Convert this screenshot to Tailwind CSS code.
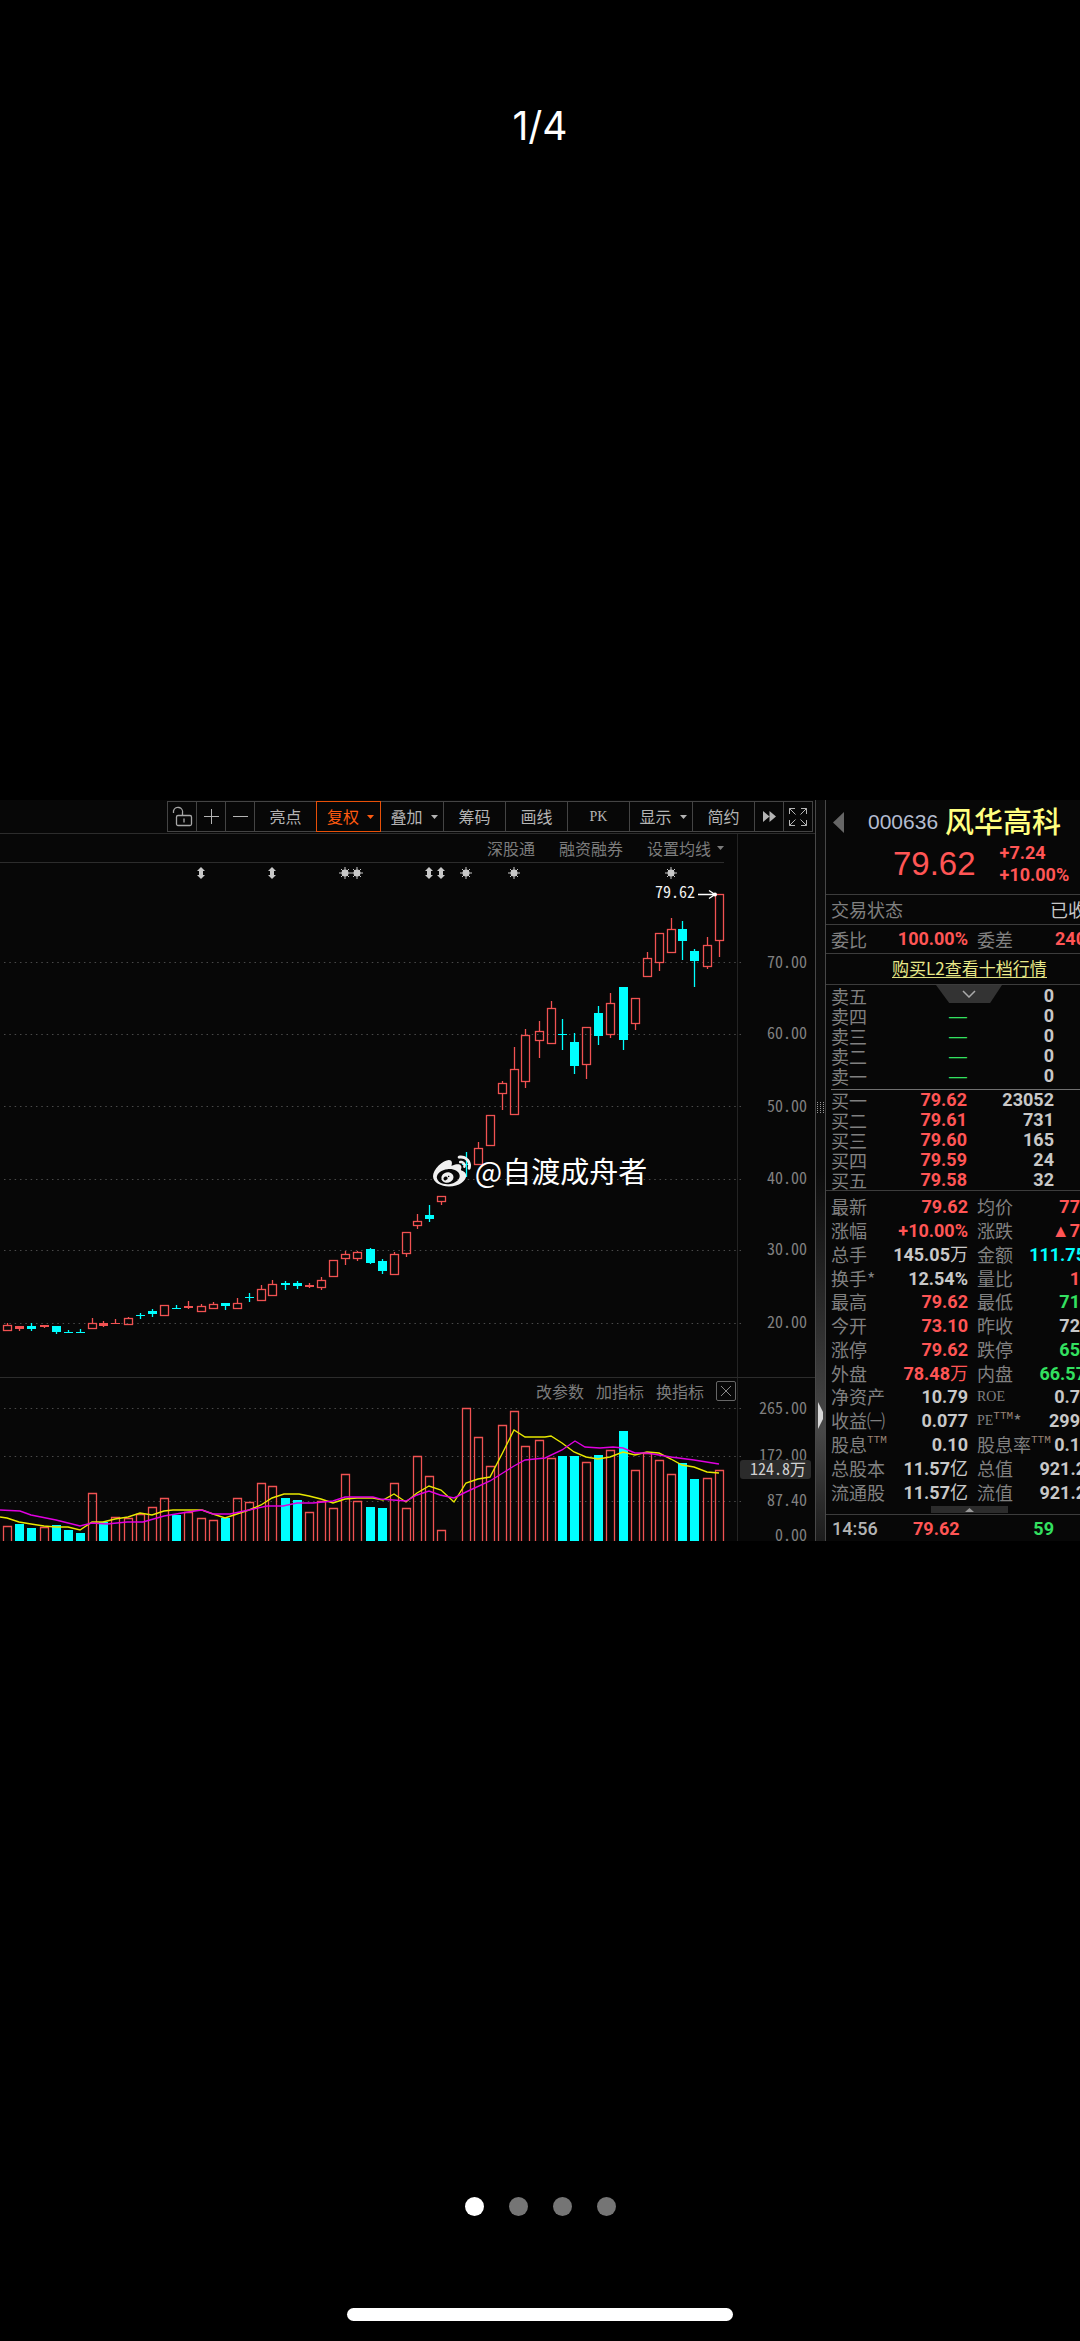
<!DOCTYPE html>
<html lang="zh-CN">
  <head>
    <meta charset="UTF-8" />
    <meta name="viewport" content="width=device-width, initial-scale=1.0" />
    <title>风华高科 000636</title>
    <script src="https://cdn.jsdelivr.net/npm/@tailwindcss/browser@4"></script>
  </head>
  <body
    class="grid min-h-screen grid-rows-[1fr_auto_1fr] overflow-x-hidden bg-black font-['Noto_Sans_CJK_SC',sans-serif] text-[#808080]"
  >
    <!-- Page counter -->
    <header class="pt-[101px] text-center">
      <h1 class="font-['Inter',sans-serif] text-[39px] leading-[50px] text-white">1/4</h1>
    </header>

    <!-- Trading screen -->
    <main class="relative flex bg-[#070707]">
      <section class="flex min-w-0 flex-1 flex-col">
        <!-- Toolbar -->
        <div class="flex justify-end border-b border-[#2c2c2c] pt-px pr-[2px] pb-px">
          <div class="flex h-[31px] border border-r-0 border-[#444] text-[16px] leading-[27px] text-[#b4b4b4]">
            <button aria-label="解锁" class="flex w-[29px] items-center justify-center border-r border-[#444]">
              <svg class="h-[22px] w-[22px]" viewBox="0 0 22 22" fill="none" stroke="#a8a8a8" stroke-width="1.300">
                <rect x="5.500" y="9.500" width="15" height="10" rx="1.500" />
                <path d="M11.500 9V7a4.500 4.500 0 0 0-9-2M2.500 4.500V7M13 12.500v4" />
              </svg>
            </button>
            <button aria-label="放大" class="flex w-[29px] items-center justify-center border-r border-[#444]">
              <svg class="h-[15px] w-[15px]" viewBox="0 0 15 15" stroke="#b4b4b4"><path d="M0 7.500h15M7.500 0v15" /></svg>
            </button>
            <button aria-label="缩小" class="flex w-[29px] items-center justify-center border-r border-[#444]">
              <svg class="h-[15px] w-[15px]" viewBox="0 0 15 15" stroke="#b4b4b4"><path d="M0 7.500h15" /></svg>
            </button>
            <button class="w-[61px]">亮点</button>
            <button
              class="-my-px flex w-[65px] items-center justify-center gap-2 border border-[#e85008] pl-1 text-[#ff5a10]"
            >
              复权
              <svg class="h-[4px] w-[7px]" viewBox="0 0 7 4" fill="currentColor"><path d="M0 0h7L3.500 4z" /></svg>
            </button>
            <button class="flex w-[63px] items-center justify-center gap-2 border-r border-[#444] pl-1">
              叠加
              <svg class="h-[4px] w-[7px]" viewBox="0 0 7 4" fill="currentColor"><path d="M0 0h7L3.500 4z" /></svg>
            </button>
            <button class="w-[62px] border-r border-[#444]">筹码</button>
            <button class="w-[62px] border-r border-[#444]">画线</button>
            <button class="w-[62px] border-r border-[#444] font-['Liberation_Serif',serif] text-[14px]">PK</button>
            <button class="flex w-[63px] items-center justify-center gap-2 border-r border-[#444] pl-1">
              显示
              <svg class="h-[4px] w-[7px]" viewBox="0 0 7 4" fill="currentColor"><path d="M0 0h7L3.500 4z" /></svg>
            </button>
            <button class="w-[62px] border-r border-[#444]">简约</button>
            <button aria-label="更多" class="flex w-[29px] items-center justify-center border-r border-[#444]">
              <svg class="h-[11px] w-[13px]" viewBox="0 0 13 11" fill="#b4b4b4"><path d="M0 0l6.500 5.500L0 11zM6.500 0L13 5.500 6.500 11z" /></svg>
            </button>
            <button aria-label="全屏" class="flex w-[29px] items-center justify-center border-r border-[#444]">
              <svg class="h-[18px] w-[18px]" viewBox="0 0 18 18" fill="none" stroke="#b4b4b4">
                <path d="M.500 6V.500H6M.500.500l6 6M12 .500h5.500V6M17.500.500l-6 6M.500 12v5.500H6M.500 17.500l6-6M12 17.500h5.500V12M17.500 17.500l-6-6" />
              </svg>
            </button>
          </div>
        </div>

        <!-- Chart links -->
        <div class="flex h-[29px] text-[16px] leading-[28px] text-[#7c7c7c]">
          <div class="flex-1 border-r border-[#242424] pr-[13px]">
            <div class="flex h-full justify-end gap-6 border-b border-[#2c2c2c]">
              <a href="#">深股通</a>
              <a href="#">融资融券</a>
              <button class="flex items-center gap-1.5">
                设置均线
                <svg class="h-[4px] w-[7px]" viewBox="0 0 7 4" fill="currentColor"><path d="M0 0h7L3.500 4z" /></svg>
              </button>
            </div>
          </div>
          <div class="w-[77px]"></div>
        </div>

        <!-- Daily candles, the units are page pixels -->
        <svg
          id="candles"
          class="block h-auto w-full font-['Noto_Sans_CJK_SC',sans-serif] text-[16px] [font-feature-settings:'hwid']"
          viewBox="0 863 815 514"
        >
          <g stroke="#4a4a4a" stroke-dasharray="1.500 3.830">
            <path d="M4 962.500H742M4 1034.500H742M4 1106.500H742M4 1179.500H742M4 1250.500H742M4 1323.500H742" />
          </g>
          <path d="M737.500 863v514" stroke="#242424" />
          <g fill="#808080" text-anchor="end">
            <text x="807" y="968">70.00</text>
            <text x="807" y="1039">60.00</text>
            <text x="807" y="1112">50.00</text>
            <text x="807" y="1184">40.00</text>
            <text x="807" y="1255">30.00</text>
            <text x="807" y="1328">20.00</text>
          </g>
          <g id="markers" fill="#c8c8c8" stroke="#c8c8c8"></g>
        </svg>

        <!-- Indicator links -->
        <div class="flex h-[27px] border-t border-[#2c2c2c] text-[16px] leading-[26px] text-[#7c7c7c]">
          <div class="flex flex-1 items-center justify-end gap-3 border-r border-[#242424] pr-px">
            <button>改参数</button>
            <button>加指标</button>
            <button>换指标</button>
            <button aria-label="关闭" class="flex h-[20px] w-[20px] items-center justify-center rounded-xs border border-[#666]">
              <svg class="h-[10px] w-[10px]" viewBox="0 0 10 10" stroke="#888"><path d="M0 0l10 10M10 0L0 10" /></svg>
            </button>
          </div>
          <div class="w-[77px]"></div>
        </div>

        <!-- Volume -->
        <svg
          id="volume"
          class="block h-auto w-full overflow-visible font-['Noto_Sans_CJK_SC',sans-serif] text-[16px] [font-feature-settings:'hwid']"
          viewBox="0 1404 815 137"
        >
          <g stroke="#4a4a4a" stroke-dasharray="1.500 3.830">
            <path d="M4 1408.500H742M4 1456.500H742M4 1501.500H742" />
          </g>
          <path d="M737.500 1404v137" stroke="#242424" />
          <g id="bars"></g>
          <g fill="none" stroke-width="1.400">
            <polyline
              stroke="#e8e800"
              points="0,1517 7,1518 19,1522 31,1524 44,1526 56,1527 68,1527 80,1530 92,1522 103,1522 115,1519 128,1517 140,1513 152,1515 164,1511 173,1510 202,1510 213,1514 225,1518 237,1514 249,1510 261,1505 272,1498 284,1494 299,1494 309,1496 321,1499 333,1503 345,1499 357,1498 373,1498 383,1500 394,1494 406,1502 417,1493 429,1486 441,1490 454,1502 466,1483 478,1479 490,1477 502,1454 514,1430 525,1437 545,1437 551,1436 562,1443 574,1452 586,1457 598,1459 610,1457 623,1452 635,1455 647,1452 659,1453 671,1459 682,1465 694,1467 707,1472 719,1473"
            />
            <polyline
              stroke="#e000e0"
              points="0,1510 20,1511 31,1515 56,1520 80,1526 92,1523 107,1524 127,1522 143,1522 164,1516 188,1512 202,1510 213,1514 230,1514 249,1510 267,1506 283,1506 297,1503 313,1503 333,1501 345,1497 373,1497 380,1499 406,1501 417,1495 429,1491 440,1495 454,1498 466,1492 490,1481 514,1466 525,1460 545,1458 562,1450 575,1441 585,1447 600,1448 613,1447 623,1448 635,1453 647,1453 671,1457 694,1460 719,1464"
            />
          </g>
          <g fill="#808080" text-anchor="end">
            <text x="807" y="1414">265.00</text>
            <text x="807" y="1461">172.00</text>
            <text x="807" y="1506">87.40</text>
            <text x="807" y="1541">0.00</text>
            <rect x="740" y="1460" width="71" height="19" rx="3" fill="#2b2b2b" />
            <text x="806" y="1475" fill="#d0d0d0">124.8万</text>
          </g>
        </svg>
      </section>

      <!-- Splitter -->
      <div
        class="relative w-[11px] border-x border-[#484848] bg-linear-to-b from-[#0c0c0c] from-50% via-[#484848] via-85% to-[#1c1c1c]"
      >
        <svg class="absolute top-[302px] left-0 h-[11px] w-[8px]" viewBox="0 0 8 11" stroke="#999" stroke-dasharray="1 1">
          <path d="M1.500 0v11M4.500 0v11M7.500 0v11" />
        </svg>
        <svg class="absolute top-[602px] left-[2px] h-[27px] w-[6px]" viewBox="0 0 6 27" fill="#d8d8d8">
          <path d="M0 0l5 10v7L0 27z" />
        </svg>
      </div>

      <!-- Quote panel -->
      <aside class="flex w-[254px] flex-col overflow-hidden text-[18px] whitespace-nowrap">
        <div class="h-[95px] border-b border-[#3c3c3c] pt-[3px] pl-[7px]">
          <div class="flex h-[38px] items-center">
            <button aria-label="上一只" class="mr-[24px]">
              <svg class="h-[21px] w-[11px]" viewBox="0 0 11 21" fill="#666"><path d="M11 0v21L0 10.500z" /></svg>
            </button>
            <span class="mr-[7px] font-['Liberation_Sans',sans-serif] text-[21px] text-[#b4bcd0]">000636</span>
            <h2 class="mb-1 text-[29px] leading-[32px] font-medium text-[#ffff80]">风华高科</h2>
          </div>
          <div class="flex h-[46px] items-center gap-6 pl-[60px] text-[#ff5555]">
            <span class="font-['Liberation_Sans',sans-serif] text-[33px] leading-[40px]">79.62</span>
            <span class="font-['Roboto',sans-serif] leading-[22px] font-bold">+7.24<br />+10.00%</span>
          </div>
        </div>
        <div class="flex h-[30px] items-center justify-between border-b border-[#3c3c3c] pl-[5px]">
          <span>交易状态</span><span class="-mr-[6px] text-[#c8c8c8]">已收</span>
        </div>
        <div class="flex h-[29px] items-center border-b border-[#3c3c3c] pb-px pl-[5px] leading-[26px]">
          <span class="w-[36px]">委比</span>
          <b class="w-[101px] text-right font-['Roboto',sans-serif] text-[#ff5555]">100.00%</b>
          <span class="ml-[9px]">委差</span>
          <b class="-mr-[6px] ml-auto font-['Roboto',sans-serif] text-[#ff5555]">240</b>
        </div>
        <div class="flex h-[31px] items-center border-b border-[#3c3c3c] pb-[2px] pl-[66px]">
          <a href="#" class="border-b border-[#e0e080] text-[17px] leading-[19px] text-[#e8e888]">购买L2查看十档行情</a>
        </div>

        <div class="relative pt-px pl-[5px]">
          <button
            aria-label="展开"
            class="absolute top-0 left-[110px] flex h-[18px] w-[66px] items-center justify-center bg-[#333] [clip-path:polygon(0_0,100%_0,82%_100%,20%_100%)]"
          >
            <svg class="h-[8px] w-[14px]" viewBox="0 0 14 8" fill="none" stroke="#aaa" stroke-width="1.500"><path d="M1 1l6 6 6-6" /></svg>
          </button>
          <table class="w-[223px] leading-[20px]">
            <tbody id="asks"></tbody>
          </table>
          <table class="mt-[3px] w-[249px] border-t border-[#707070] leading-[20px]">
            <tbody id="bids"></tbody>
          </table>
        </div>

        <dl id="details" class="flex flex-1 flex-col border-t border-[#3c3c3c] pt-[4px] pb-[2px] pl-[5px]"></dl>

        <div class="ml-[105px] flex h-[7px] w-[77px] items-center justify-center bg-[#2c2c2c]">
          <svg class="h-[4px] w-[9px]" viewBox="0 0 9 4" fill="#999"><path d="M0 4l4.500-4L9 4z" /></svg>
        </div>
        <div
          class="mt-px flex h-[27px] items-center border-t border-[#3c3c3c] pl-[6px] font-['Roboto',sans-serif] font-bold"
        >
          <span class="w-[81px] font-medium text-[#b4b4b4]">14:56</span>
          <span class="text-[#ff5555]">79.62</span>
          <span class="mr-[26px] ml-auto text-[#33e060]">59</span>
        </div>
      </aside>

      <!-- Watermark -->
      <p class="pointer-events-none absolute inset-0 flex items-center justify-center gap-1 text-[29px] text-white">
        <svg class="h-[38px] w-[38px]" viewBox="0 0 24 24" fill="#f0f0f0">
          <path
            d="M10.098 20.323c-3.977.391-7.414-1.406-7.672-4.020-.259-2.609 2.759-5.047 6.740-5.441 3.979-.394 7.413 1.404 7.671 4.018.259 2.600-2.759 5.049-6.737 5.439l-.002.004zM9.050 17.219c-.384.616-1.208.884-1.829.602-.612-.279-.793-.991-.406-1.593.379-.595 1.176-.861 1.793-.601.622.263.820.972.442 1.592zm1.270-1.627c-.141.237-.449.353-.689.253-.236-.090-.313-.361-.177-.586.138-.227.436-.346.672-.240.239.090.315.360.180.601l.014-.028zm.176-2.719c-1.893-.493-4.033.450-4.857 2.118-.836 1.704-.026 3.591 1.886 4.210 1.983.640 4.318-.341 5.132-2.179.800-1.793-.201-3.642-2.161-4.149zm7.563-1.224c-.346-.105-.570-.180-.405-.615.375-.977.420-1.804 0-2.404-.781-1.112-2.915-1.053-5.364-.030 0 0-.766.331-.571-.271.376-1.217.315-2.224-.270-2.809-1.338-1.337-4.869.045-7.888 3.080C1.309 10.870 0 13.273 0 15.348c0 3.981 5.099 6.395 10.086 6.395 6.536 0 10.888-3.801 10.888-6.820 0-1.822-1.547-2.854-2.915-3.284v.010zm1.908-5.092c-.766-.856-1.908-1.187-2.960-.962-.436.090-.706.511-.616.932.090.420.511.691.932.602.511-.105 1.067.044 1.442.465.376.421.466.977.316 1.473-.136.406.089.856.510.992.405.119.857-.105.992-.512.330-1.021.120-2.178-.646-3.035l.030.045zm2.418-2.195c-1.576-1.757-3.905-2.419-6.054-1.968-.496.104-.812.587-.706 1.081.104.496.586.813 1.082.707 1.532-.331 3.185.150 4.296 1.383 1.112 1.246 1.429 2.943.947 4.416-.165.480.106 1.007.586 1.157.479.165.991-.104 1.157-.586.675-2.088.241-4.478-1.338-6.235l.030.045z"
          />
        </svg>
        @自渡成舟者
      </p>
    </main>

    <!-- Pager -->
    <footer class="flex flex-col items-center justify-end pb-5">
      <nav class="mb-[92px] flex gap-[25px]">
        <button aria-label="1" class="h-[19px] w-[19px] rounded-full bg-white"></button>
        <button aria-label="2" class="h-[19px] w-[19px] rounded-full bg-[#757575]"></button>
        <button aria-label="3" class="h-[19px] w-[19px] rounded-full bg-[#757575]"></button>
        <button aria-label="4" class="h-[19px] w-[19px] rounded-full bg-[#757575]"></button>
      </nav>
      <div class="h-[13px] w-[386px] rounded-full bg-white"></div>
    </footer>

    <script>
      const RED = "#f05252";
      const CYAN = "#00ffff";

      // x, high, body top, body bottom, low, candle colour, volume top, volume colour
      const days = [
        [7, 1323, 1325, 1330, 1330, "r", 1526, "r"],
        [19, 1326, 1326, 1329, 1330, "r", 1524, "c"],
        [31, 1323, 1326, 1329, 1330, "c", 1528, "c"],
        [44, 1325, 1325, 1327, 1327, "r", 1527, "r"],
        [56, 1326, 1326, 1332, 1333, "c", 1525, "c"],
        [68, 1330, 1332, 1332, 1332, "c", 1530, "c"],
        [80, 1329, 1332, 1332, 1332, "c", 1533, "c"],
        [92, 1318, 1323, 1328, 1328, "r", 1493, "r"],
        [103, 1321, 1323, 1326, 1326, "r", 1522, "c"],
        [115, 1319, 1323, 1323, 1323, "r", 1517, "r"],
        [128, 1317, 1318, 1324, 1324, "r", 1518, "r"],
        [140, 1313, 1315, 1315, 1318, "c", 1514, "r"],
        [152, 1309, 1311, 1314, 1316, "c", 1507, "r"],
        [164, 1305, 1305, 1315, 1315, "r", 1498, "r"],
        [176, 1305, 1308, 1308, 1308, "c", 1515, "c"],
        [188, 1301, 1306, 1308, 1308, "r", 1512, "r"],
        [201, 1304, 1306, 1311, 1311, "r", 1518, "r"],
        [213, 1302, 1304, 1308, 1308, "r", 1520, "r"],
        [225, 1303, 1303, 1306, 1309, "c", 1518, "c"],
        [237, 1298, 1303, 1308, 1308, "r", 1498, "r"],
        [249, 1293, 1297, 1297, 1301, "c", 1502, "r"],
        [261, 1285, 1289, 1300, 1300, "r", 1483, "r"],
        [272, 1280, 1284, 1295, 1295, "r", 1486, "r"],
        [285, 1281, 1283, 1285, 1289, "c", 1498, "c"],
        [297, 1281, 1283, 1286, 1288, "c", 1500, "c"],
        [309, 1283, 1285, 1287, 1287, "r", 1512, "r"],
        [321, 1277, 1280, 1287, 1289, "r", 1501, "r"],
        [333, 1260, 1260, 1276, 1276, "r", 1508, "r"],
        [345, 1251, 1254, 1258, 1264, "r", 1474, "r"],
        [357, 1251, 1252, 1258, 1260, "r", 1501, "r"],
        [370, 1248, 1249, 1263, 1263, "c", 1507, "c"],
        [382, 1259, 1261, 1271, 1273, "c", 1508, "c"],
        [394, 1252, 1254, 1274, 1274, "r", 1483, "r"],
        [406, 1232, 1232, 1253, 1256, "r", 1508, "r"],
        [417, 1214, 1221, 1225, 1228, "r", 1456, "r"],
        [429, 1205, 1215, 1219, 1221, "c", 1476, "r"],
        [441, 1196, 1196, 1201, 1204, "r", 1530, "r"],
        [466, 1152, 1164, 1164, 1176, "c", 1408, "r"],
        [478, 1142, 1148, 1164, 1164, "r", 1437, "r"],
        [490, 1115, 1115, 1145, 1145, "r", 1466, "r"],
        [502, 1081, 1083, 1093, 1109, "r", 1425, "r"],
        [514, 1047, 1069, 1114, 1114, "r", 1411, "r"],
        [525, 1029, 1035, 1081, 1087, "r", 1446, "r"],
        [539, 1021, 1031, 1040, 1057, "r", 1440, "r"],
        [551, 1001, 1008, 1043, 1043, "r", 1458, "r"],
        [562, 1019, 1034, 1035, 1049, "c", 1456, "c"],
        [574, 1033, 1042, 1066, 1073, "c", 1456, "c"],
        [586, 1027, 1027, 1064, 1078, "r", 1462, "r"],
        [598, 1006, 1013, 1036, 1044, "c", 1455, "c"],
        [610, 993, 1003, 1034, 1037, "r", 1450, "r"],
        [623, 987, 987, 1040, 1049, "c", 1431, "c"],
        [635, 998, 998, 1023, 1029, "r", 1470, "r"],
        [647, 952, 958, 976, 976, "r", 1453, "r"],
        [659, 933, 933, 962, 970, "r", 1460, "r"],
        [671, 918, 929, 952, 952, "r", 1474, "r"],
        [682, 921, 929, 941, 959, "c", 1463, "c"],
        [694, 949, 951, 961, 986, "c", 1479, "c"],
        [707, 937, 945, 966, 968, "r", 1478, "r"],
        [719, 894, 894, 940, 956, "r", 1470, "r"],
      ];

      let candles = "";
      let bars = "";
      days.forEach(([x, high, top, bottom, low, color, vol, volColor]) => {
        const c = color === "r" ? RED : CYAN;
        candles += `<path d="M${x + 0.5} ${high}V${top}M${x + 0.5} ${bottom}V${low + 1}" stroke="${c}" stroke-width="1.3"/>`;
        if (color === "r" && bottom - top > 3) {
          candles += `<rect x="${x - 3.5}" y="${top + 0.5}" width="8" height="${bottom - top}" fill="none" stroke="${c}" stroke-width="1.3"/>`;
        } else {
          candles += `<rect x="${x - 4}" y="${top}" width="9" height="${Math.max(bottom - top, 1)}" fill="${c}"/>`;
        }
        bars +=
          volColor === "r"
            ? `<path d="M${x - 3.5} 1541V${vol + 0.5}h8V1541" fill="none" stroke="${RED}" stroke-width="1.3"/>`
            : `<rect x="${x - 4}" y="${vol}" width="9" height="${1541 - vol}" fill="${CYAN}"/>`;
      });
      document.getElementById("candles").innerHTML +=
        candles +
        `<text x="695" y="898" text-anchor="end" fill="#f0f0f0">79.62</text>
         <path d="M698 894.5h16M709 890.5l6 4-6 4" fill="none" stroke="#fff" stroke-width="1.3"/>
         <circle cx="715" cy="894.5" r="2" fill="#fff"/>`;
      document.getElementById("bars").innerHTML = bars;

      // Event markers above the candles
      let markers = "";
      [201, 272, 429, 441].forEach((x) => {
        markers += `<path d="M${x} 867l4 4h-2v4h2l-4 4-4-4h2v-4h-2z" stroke="none"/>`;
      });
      [345, 357, 466, 514, 671].forEach((x) => {
        markers += `<circle cx="${x}" cy="873" r="3.500" stroke="none"/><path d="M${x - 6} 873h12M${x} 867v12M${x - 4} 869l8 8M${x + 4} 869l-8 8"/>`;
      });
      document.getElementById("markers").innerHTML = markers;

      // Order book
      const asks = ["卖五", "卖四", "卖三", "卖二", "卖一"];
      document.getElementById("asks").innerHTML = asks
        .map(
          (name, i) => `<tr>
            <th class="w-[36px] p-0 text-left font-normal">${name}</th>
            <td class="w-[100px] p-0 text-right font-['Liberation_Sans',sans-serif] text-[#33e060]">${i ? "—" : ""}</td>
            <td class="p-0 text-right font-['Roboto',sans-serif] font-bold text-[#c8c8c8]">0</td>
          </tr>`
        )
        .join("");
      const bids = [
        ["买一", "79.62", "23052"],
        ["买二", "79.61", "731"],
        ["买三", "79.60", "165"],
        ["买四", "79.59", "24"],
        ["买五", "79.58", "32"],
      ];
      document.getElementById("bids").innerHTML = bids
        .map(
          ([name, price, count]) => `<tr>
            <th class="w-[36px] p-0 text-left font-normal">${name}</th>
            <td class="w-[100px] p-0 text-right font-['Roboto',sans-serif] font-bold text-[#ff5555]">${price}</td>
            <td class="p-0 pr-[26px] text-right font-['Roboto',sans-serif] font-bold text-[#c8c8c8]">${count}</td>
          </tr>`
        )
        .join("");

      // Details
      const tones = {
        r: "text-[#ff5555]",
        w: "text-[#c8c8c8]",
        g: "text-[#33e060]",
        c: "text-[#00ffff]",
      };
      const ttm = `<sup class="top-0 self-start pt-[2px] font-['Liberation_Mono',monospace] text-[11px] leading-[11px] text-[#9a8274]">TTM</sup>`;
      const unit = (text) => `<span class="font-['Noto_Sans_CJK_SC',sans-serif] font-normal">${text}</span>`;
      const serif = (text) => `<span class="font-['Liberation_Serif',serif] text-[14px]">${text}</span>`;
      const details = [
        ["最新", "79.62", "r", "均价", "77", "r"],
        ["涨幅", "+10.00%", "r", "涨跌", "▲7", "r"],
        ["总手", "145.05" + unit("万"), "w", "金额", "111.75", "c"],
        ["换手*", "12.54%", "w", "量比", "1", "r"],
        ["最高", "79.62", "r", "最低", "71", "g"],
        ["今开", "73.10", "r", "昨收", "72", "w"],
        ["涨停", "79.62", "r", "跌停", "65", "g"],
        ["外盘", "78.48" + unit("万"), "r", "内盘", "66.57", "g"],
        ["净资产", "10.79", "w", serif("ROE"), "0.7", "w"],
        ["收益㈠", "0.077", "w", serif("PE") + ttm + "*", "299", "w"],
        ["股息" + ttm, "0.10", "w", "股息率" + ttm, "0.1", "w"],
        ["总股本", "11.57" + unit("亿"), "w", "总值", "921.2", "w"],
        ["流通股", "11.57" + unit("亿"), "w", "流值", "921.2", "w"],
      ];
      document.getElementById("details").innerHTML = details
        .map(([name, value, tone, name2, value2, tone2]) => {
          // the longest figures run over the right edge
          const edge = value2.length > 4 ? "-mr-[6px]" : "";
          return `<div class="flex flex-1 items-center leading-[23px]">
            <dt class="flex w-[57px] items-center">${name}</dt>
            <dd class="w-[80px] text-right font-['Roboto',sans-serif] font-bold ${tones[tone]}">${value}</dd>
            <dt class="ml-[9px] flex items-center">${name2}</dt>
            <dd class="ml-auto ${edge} font-['Roboto',sans-serif] font-bold ${tones[tone2]}">${value2}</dd>
          </div>`;
        })
        .join("");
    </script>
  </body>
</html>
